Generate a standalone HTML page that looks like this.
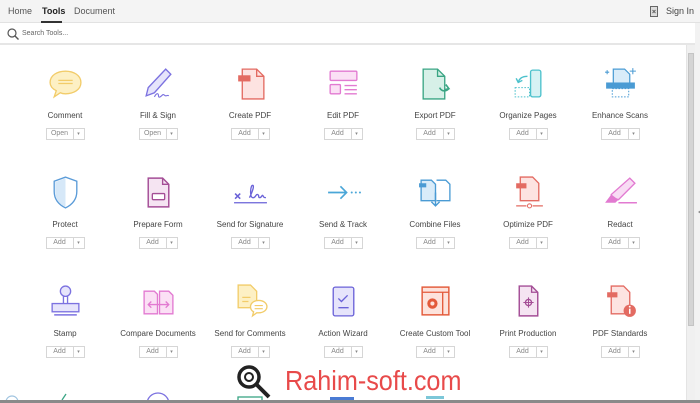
<!DOCTYPE html>
<html><head><meta charset="utf-8">
<style>
*{margin:0;padding:0;box-sizing:border-box}
body{width:700px;height:403px;overflow:hidden;background:#fff;font-family:"Liberation Sans",sans-serif;position:relative;color:#505050}
#top{position:absolute;left:0;top:0;width:700px;height:23px;background:#f4f4f4;border-bottom:1px solid #e2e2e2}
.tab{position:absolute;top:6px;font-size:9px;color:#555}
#search{position:absolute;left:0;top:23px;width:695px;height:22px;background:#fff;border-bottom:2px solid #e6e6e6}
#rp{position:absolute;left:695px;top:23px;width:5px;height:380px;background:#f2f2f2}
#sb{position:absolute;left:686px;top:45px;width:9px;height:355px;background:#f0f0f0;border-left:1px solid #e4e4e4}
#thumb{position:absolute;left:1px;top:8px;width:6px;height:273px;background:#d4d4d4;border:1px solid #c4c4c4}
.t{position:absolute;width:92px;text-align:center}
.t svg{display:block;margin:0 auto;width:37px;height:37px}
.l{font-size:8px;color:#444;margin-top:9px;white-space:nowrap}
.b{margin:8px auto 0;width:39px;height:12px;border:1px solid #d6d6d6;display:flex;font-size:7px;color:#888;background:#fff}
.b span:first-child{flex:1;text-align:center;line-height:10px;border-right:1px solid #d6d6d6}
.b span:last-child{width:10px;text-align:center;line-height:10px;font-size:5px}
#bot{position:absolute;left:0;top:400px;width:700px;height:3px;background:#8a8a8a}
#wm{position:absolute;left:285px;top:365px;font-size:28px;color:#e84a4a;transform:scaleX(0.9);transform-origin:0 0}
</style></head><body>
<div id="top">
<span class="tab" style="left:8px">Home</span>
<span class="tab" style="left:42px;color:#222;font-weight:bold">Tools</span>
<div style="position:absolute;left:41px;top:21px;width:21px;height:2px;background:#333"></div>
<span class="tab" style="left:74px">Document</span>
<svg style="position:absolute;left:650px;top:6px" width="8" height="11"><rect x="0.5" y="0.5" width="7" height="10" fill="#ddd" stroke="#666"/><path d="M2.5 4l3 3M5.5 4l-3 3" stroke="#666"/></svg>
<span class="tab" style="left:666px;color:#444">Sign In</span>
</div>
<div id="search">
<svg style="position:absolute;left:7px;top:5px" width="12" height="12"><circle cx="5" cy="5" r="4" fill="none" stroke="#555" stroke-width="1.2"/><path d="M8 8l3.5 3.5" stroke="#555" stroke-width="1.4"/></svg>
<span style="position:absolute;left:22px;top:7px;font-size:7px;color:#666">Search Tools...</span>
</div>
<div id="rp"><div style="position:absolute;left:1px;top:187px;border:2px solid transparent;border-right:3px solid #888"></div></div>
<div id="sb"><div id="thumb"></div></div>

<!-- row 1 -->
<div class="t" style="left:19px;top:65px"><svg viewBox="0 0 36 36"><path d="M18 6c8 0 15 4 15 11s-7 11-15 11c-2 0-3 0-5-1l-6 4 2-6c-4-2-6-5-6-8 0-7 7-11 15-11z" fill="#fdf0c4" stroke="#f2cc6a" stroke-width="1.3"/><path d="M11 15h14M11 18h14" stroke="#f2cc6a" stroke-width="1.2"/></svg><div class="l">Comment</div><div class="b"><span>Open</span><span>▾</span></div></div>
<div class="t" style="left:112px;top:65px"><svg viewBox="0 0 36 36"><path d="M25 4l5 5-16 18-8 3 2-8z" fill="#e6e4fb" stroke="#7c72e0" stroke-width="1.3"/><path d="M14 31c2-4 4-4 4-1s3 0 4-1 2 1 3 1 2-1 3 0" fill="none" stroke="#7c72e0" stroke-width="1.1"/></svg><div class="l">Fill &amp; Sign</div><div class="b"><span>Open</span><span>▾</span></div></div>
<div class="t" style="left:204px;top:65px"><svg viewBox="0 0 36 36"><path d="M10 4h14l7 7v22H10z" fill="#fde3e1" stroke="#e36b62" stroke-width="1.3"/><path d="M24 4v7h7" fill="none" stroke="#e36b62" stroke-width="1.3"/><rect x="6" y="10" width="12" height="6" fill="#e36b62"/></svg><div class="l">Create PDF</div><div class="b"><span>Add</span><span>▾</span></div></div>
<div class="t" style="left:297px;top:65px"><svg viewBox="0 0 36 36"><rect x="5" y="6" width="26" height="9" rx="1" fill="#fbe0f5" stroke="#e27ad1" stroke-width="1.3"/><rect x="5" y="19" width="10" height="9" rx="1" fill="#fbe0f5" stroke="#e27ad1" stroke-width="1.3"/><path d="M19 20h12M19 24h12M19 28h12" stroke="#e27ad1" stroke-width="1.3"/></svg><div class="l">Edit PDF</div><div class="b"><span>Add</span><span>▾</span></div></div>
<div class="t" style="left:389px;top:65px"><svg viewBox="0 0 36 36"><path d="M6 4h14l7 7v22H6z" fill="#d7f0e8" stroke="#3aa584" stroke-width="1.3"/><path d="M20 4v7h7" fill="none" stroke="#3aa584" stroke-width="1.3"/><path d="M22 22c2 4 6 4 9 1M28 19l3 4-4 1" fill="none" stroke="#3aa584" stroke-width="1.6"/></svg><div class="l">Export PDF</div><div class="b"><span>Add</span><span>▾</span></div></div>
<div class="t" style="left:482px;top:65px"><svg viewBox="0 0 36 36"><rect x="20" y="5" width="10" height="26" rx="2" fill="#d6f2f4" stroke="#4cc1cc" stroke-width="1.3"/><rect x="5" y="22" width="14" height="9" fill="none" stroke="#4cc1cc" stroke-dasharray="1.5 1.5"/><path d="M17 11c-5 0-8 2-9 6M6 13l2 4 4-2" fill="none" stroke="#4cc1cc" stroke-width="1.4"/></svg><div class="l">Organize Pages</div><div class="b"><span>Add</span><span>▾</span></div></div>
<div class="t" style="left:574px;top:65px"><svg viewBox="0 0 36 36"><path d="M11 4h11l5 5v11H11z" fill="#d9ecf9" stroke="#4a9bd4" stroke-width="1.2"/><rect x="4" y="17" width="28" height="6" fill="#4a9bd4"/><rect x="10" y="23" width="16" height="8" fill="none" stroke="#4a9bd4" stroke-dasharray="1.5 1.5"/><path d="M30 3v6M27 6h6M5 5v4M3 7h4" stroke="#4a9bd4" stroke-width="1"/></svg><div class="l">Enhance Scans</div><div class="b"><span>Add</span><span>▾</span></div></div>

<!-- row 2 -->
<div class="t" style="left:19px;top:174px"><svg viewBox="0 0 36 36"><path d="M18 3l11 4v10c0 8-5 13-11 16C12 30 7 25 7 17V7z" fill="#fff" stroke="#5a9bd8" stroke-width="1.3"/><path d="M18 4v28C12 29 8 25 8 17V8z" fill="#d6e8f8"/></svg><div class="l">Protect</div><div class="b"><span>Add</span><span>▾</span></div></div>
<div class="t" style="left:112px;top:174px"><svg viewBox="0 0 36 36"><path d="M8 4h14l6 6v22H8z" fill="#f5e4f2" stroke="#a44e96" stroke-width="1.4"/><path d="M22 4v6h6" fill="none" stroke="#a44e96" stroke-width="1.3"/><rect x="12" y="19" width="12" height="6" rx="1" fill="#fff" stroke="#a44e96" stroke-width="1.3"/></svg><div class="l">Prepare Form</div><div class="b"><span>Add</span><span>▾</span></div></div>
<div class="t" style="left:204px;top:174px"><svg viewBox="0 0 36 36"><path d="M3 19l5 5M8 19l-5 5" stroke="#6a62d8" stroke-width="1.5"/><path d="M17 23c3-6 5-12 3-12s-3 11 0 12 3-4 5-3 0 3 2 3 2-3 3-2 0 2 3 2" fill="none" stroke="#6a62d8" stroke-width="1.3"/><path d="M2 28h32" stroke="#6a62d8" stroke-width="1.2"/></svg><div class="l">Send for Signature</div><div class="b"><span>Add</span><span>▾</span></div></div>
<div class="t" style="left:297px;top:174px"><svg viewBox="0 0 36 36"><path d="M3 18h17M15 12l6 6-6 6" fill="none" stroke="#4aa6d8" stroke-width="1.6"/><circle cx="26" cy="18" r="1" fill="#4aa6d8"/><circle cx="30" cy="18" r="1" fill="#4aa6d8"/><circle cx="34" cy="18" r="1" fill="#4aa6d8"/></svg><div class="l">Send &amp; Track</div><div class="b"><span>Add</span><span>▾</span></div></div>
<div class="t" style="left:389px;top:174px"><svg viewBox="0 0 36 36"><path d="M4 6h10l4 4v16H4z" fill="#d9ecf9" stroke="#4a9bd4" stroke-width="1.3"/><path d="M19 6h9l4 4v16H19" fill="#fff" stroke="#4a9bd4" stroke-width="1.3"/><rect x="2" y="9" width="7" height="4" fill="#4a9bd4"/><path d="M18 18v13M14 27l4 4 4-4" fill="none" stroke="#4a9bd4" stroke-width="1.4"/></svg><div class="l">Combine Files</div><div class="b"><span>Add</span><span>▾</span></div></div>
<div class="t" style="left:482px;top:174px"><svg viewBox="0 0 36 36"><path d="M10 3h12l6 6v17H10z" fill="#fde3e1" stroke="#e36b62" stroke-width="1.3"/><rect x="6" y="9" width="10" height="5" fill="#e36b62"/><path d="M6 31h10M22 31h10" stroke="#e36b62" stroke-width="1.3"/><circle cx="19" cy="31" r="2" fill="none" stroke="#e36b62"/></svg><div class="l">Optimize PDF</div><div class="b"><span>Add</span><span>▾</span></div></div>
<div class="t" style="left:574px;top:174px"><svg viewBox="0 0 36 36"><path d="M27 4l5 5-16 16-6-2-1-3z" fill="#f8dcf4" stroke="#e27ad1" stroke-width="1.3"/><path d="M9 20l-6 8h10l3-3z" fill="#e27ad1"/><path d="M16 28h18" stroke="#e27ad1" stroke-width="1.5"/></svg><div class="l">Redact</div><div class="b"><span>Add</span><span>▾</span></div></div>

<!-- row 3 -->
<div class="t" style="left:19px;top:283px"><svg viewBox="0 0 36 36"><circle cx="18" cy="8" r="5" fill="#e6e4fb" stroke="#7c72e0" stroke-width="1.3"/><path d="M16 13v7M20 13v7" stroke="#7c72e0" stroke-width="1.3"/><rect x="5" y="20" width="26" height="8" fill="#e6e4fb" stroke="#7c72e0" stroke-width="1.3"/><path d="M7 31h22" stroke="#7c72e0" stroke-width="1.5"/></svg><div class="l">Stamp</div><div class="b"><span>Add</span><span>▾</span></div></div>
<div class="t" style="left:112px;top:283px"><svg viewBox="0 0 36 36"><path d="M4 8h10l3 3v19H4zM19 8h9l4 4v18H19z" fill="#fbe0f5" stroke="#e27ad1" stroke-width="1.3"/><path d="M8 21h20M11 18l-3 3 3 3M25 18l3 3-3 3" fill="none" stroke="#e27ad1" stroke-width="1.3"/></svg><div class="l">Compare Documents</div><div class="b"><span>Add</span><span>▾</span></div></div>
<div class="t" style="left:204px;top:283px"><svg viewBox="0 0 36 36"><path d="M6 2h12l6 6v16H6z" fill="#fdf0c4" stroke="#f2cc6a" stroke-width="1.3"/><path d="M10 14h8M10 18h6" stroke="#f2cc6a" stroke-width="1.2"/><path d="M26 17c5 0 8 3 8 6s-3 6-8 6h-2l-4 3 1-4c-2-1-3-3-3-5 0-3 3-6 8-6z" fill="#fff" stroke="#f2cc6a" stroke-width="1.3"/><path d="M22 22h8M22 25h8" stroke="#f2cc6a" stroke-width="1.1"/></svg><div class="l">Send for Comments</div><div class="b"><span>Add</span><span>▾</span></div></div>
<div class="t" style="left:297px;top:283px"><svg viewBox="0 0 36 36"><rect x="8" y="4" width="20" height="28" rx="2" fill="#e6e4fb" stroke="#6a62d8" stroke-width="1.3"/><path d="M13 15l3 3 6-6M13 24h10" fill="none" stroke="#6a62d8" stroke-width="1.3"/></svg><div class="l">Action Wizard</div><div class="b"><span>Add</span><span>▾</span></div></div>
<div class="t" style="left:389px;top:283px"><svg viewBox="0 0 36 36"><rect x="5" y="4" width="26" height="27" fill="#fde3dc" stroke="#e35a3a" stroke-width="1.4"/><path d="M5 9h26M25 9v22" stroke="#e35a3a" stroke-width="1.3"/><circle cx="15" cy="20" r="5" fill="#e35a3a"/><circle cx="15" cy="20" r="2" fill="#fde3dc"/></svg><div class="l">Create Custom Tool</div><div class="b"><span>Add</span><span>▾</span></div></div>
<div class="t" style="left:482px;top:283px"><svg viewBox="0 0 36 36"><path d="M9 3h12l6 6v23H9z" fill="#f5e4f2" stroke="#a44e96" stroke-width="1.4"/><path d="M21 3v6h6" fill="none" stroke="#a44e96" stroke-width="1.3"/><circle cx="18" cy="19" r="3" fill="none" stroke="#a44e96" stroke-width="1.3"/><path d="M18 14v10M13 19h10" stroke="#a44e96"/></svg><div class="l">Print Production</div><div class="b"><span>Add</span><span>▾</span></div></div>
<div class="t" style="left:574px;top:283px"><svg viewBox="0 0 36 36"><path d="M9 3h12l6 6v21H9z" fill="#fde3e1" stroke="#e36b62" stroke-width="1.3"/><rect x="5" y="9" width="10" height="5" fill="#e36b62"/><circle cx="27" cy="27" r="6" fill="#e36b62"/><path d="M27 25v5" stroke="#fff" stroke-width="1.5"/><circle cx="27" cy="23" r="0.9" fill="#fff"/></svg><div class="l">PDF Standards</div><div class="b"><span>Add</span><span>▾</span></div></div>

<!-- partial row 4 -->
<svg style="position:absolute;left:0;top:390px" width="690" height="10"><circle cx="12" cy="12" r="6" fill="none" stroke="#a0c4e0" stroke-width="1.2"/><path d="M66 4l-4 6" stroke="#3aa584" stroke-width="1.3"/><circle cx="158" cy="14" r="11" fill="none" stroke="#7c72e0" stroke-width="1.3"/><rect x="238" y="7" width="24" height="6" fill="none" stroke="#3aa584" stroke-width="1.3"/><rect x="330" y="7" width="24" height="4" fill="#4a7bd4"/><rect x="426" y="6" width="18" height="3" fill="#7cc7d8"/></svg>

<svg style="position:absolute;left:236px;top:364px" width="40" height="38"><circle cx="13" cy="13" r="10" fill="none" stroke="#222" stroke-width="3.5"/><circle cx="13" cy="13" r="4" fill="none" stroke="#222" stroke-width="2"/><path d="M21 21l12 12" stroke="#222" stroke-width="4"/></svg>
<div id="wm">Rahim-soft.com</div>
<div id="bot"></div>
</body></html>
